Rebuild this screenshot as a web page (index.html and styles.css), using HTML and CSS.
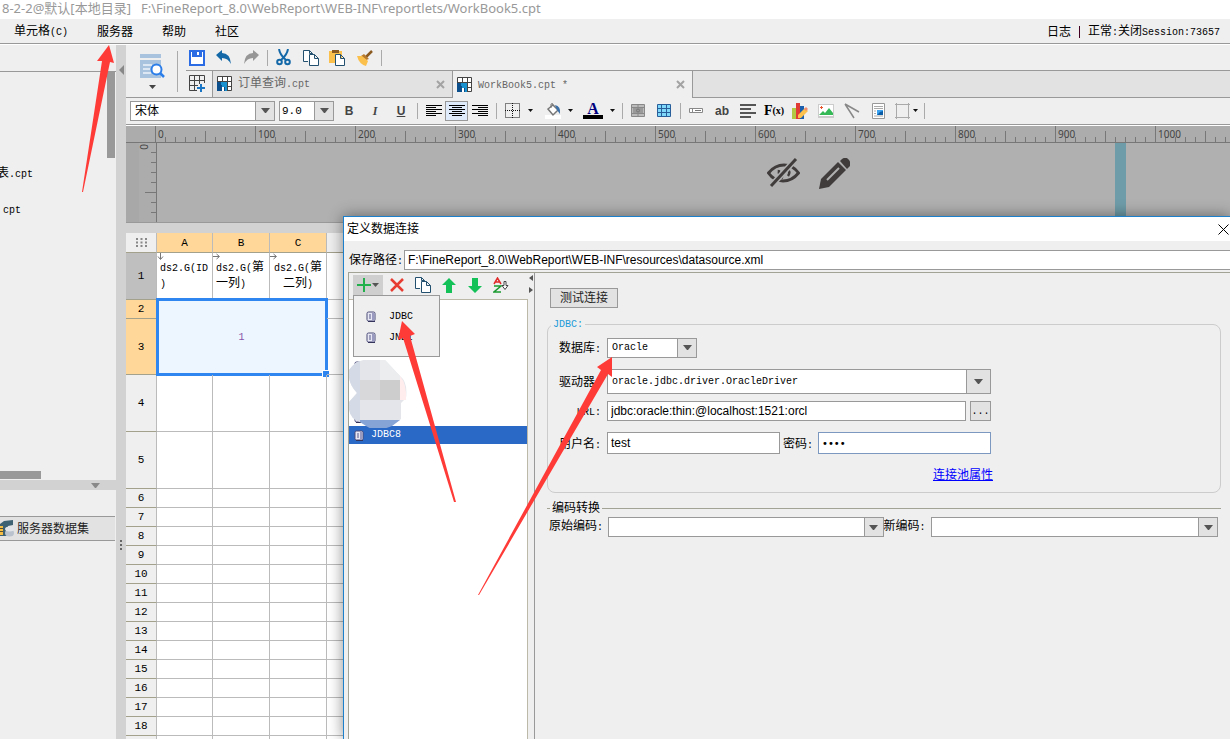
FILE: index.html
```html
<!DOCTYPE html>
<html lang="zh-CN">
<head>
<meta charset="utf-8">
<title>FineReport Designer</title>
<link rel="stylesheet" href="styles.css">
</head>
<body>
<svg class="defs" width="0" height="0" aria-hidden="true">
  <symbol id="db" viewBox="0 0 10 11"><rect x="1" y="1" width="8" height="9" rx="1.500" fill="#e8e8f4" stroke="#4a4a78"/><path d="M6 2h2.500v7.500H6z" fill="#9a9ac0"/><path d="M4 3v5" stroke="#55558a" fill="none"/><path d="M2 10.500h7" stroke="#33335c"/></symbol>
  <symbol id="book" viewBox="0 0 16 16"><path d="M.5.5h14v14H.5z" fill="#fff" stroke="#444"/><path d="M5.500.5v14M10.500.5v14M.5 5.500h14M.5 10.500h14" stroke="#444" fill="none"/><path d="M0 6h10v9H0z" fill="#0b4f8c"/><path d="M4 6h6v9H8v-4H5V9H4z" fill="#1a92d0"/><path d="M5 11h2v4H5z" fill="#fff"/></symbol>
  <symbol id="copy" viewBox="0 0 16 16"><path d="M5 11.500H.5V.5h6l3 3V5M6.500.5v3h3" fill="#fff" stroke="#24506f"/><path d="M6.500 4.500h5l4 4v7h-9zM11.500 4.500v4h4" fill="#fff" stroke="#24506f"/></symbol>
  <symbol id="caret" viewBox="0 0 9 5"><path d="M0 0h9L5 5H4z" fill="#555"/></symbol>
  <symbol id="drop" viewBox="0 0 5 3"><path d="M0 0h5L2.500 3z" fill="#111"/></symbol>
</svg>

<header class="titlebar"><span>8-2-2@默认[本地目录]</span><span>F:\FineReport_8.0\WebReport\WEB-INF\reportlets/WorkBook5.cpt</span></header>

<nav class="menubar">
  <button>单元格<i>(C)</i></button>
  <button>服务器</button>
  <button>帮助</button>
  <button>社区</button>
  <div class="status"><span>日志</span><span class="bar"></span><span>正常<i>:</i>关闭<i>Session:73657</i></span></div>
</nav>

<div class="workspace">
  <aside class="side">
    <div class="side-head"></div>
    <div class="tree">
      <div class="tree-list">
        <div class="node node-a"><span>表<i>.cpt</i></span></div>
        <div class="node node-b"><span><i>cpt</i></span></div>
      </div>
      <div class="vthumb"></div>
    </div>
    <div class="hthumb"></div>
    <div class="hsplit"><svg width="9" height="5"><path d="M0 0h9L5 5H4z" fill="#888"/></svg></div>
    <div class="dataset">
      <svg width="14" height="17" viewBox="0 0 14 17"><path d="M0 4 4 1l9-1v5L8 6v10H0z" fill="#3f6273"/><path d="M0 6h3v9H0z" fill="#f6be42"/><path d="M0 8.500h3M0 11.500h3" stroke="#5a5030"/><ellipse cx="9.500" cy="13" rx="4.500" ry="3.500" fill="#b9c2cd"/><ellipse cx="9.500" cy="9" rx="4.500" ry="2.500" fill="#e1e5ea"/></svg>
      <span>服务器数据集</span>
    </div>
    <div class="side-rest"></div>
  </aside>
  <div class="vsplit">
    <svg width="5" height="10"><path d="M5 0v10L0 5z" fill="#888"/></svg>
    <svg width="3" height="11"><path d="M0 0h2v2H0zM0 4h2v2H0zM0 8h2v2H0z" fill="#666"/></svg>
  </div>

  <main class="editor">
    <div class="top">
      <button class="preview" aria-label="预览">
        <svg width="25" height="26" viewBox="0 0 25 26"><path d="M0 1h21v4H0z" fill="#a9c3de"/><path d="M0 7h21v18H0z" fill="#a9c3de"/><path d="M3 12h9M3 16h7M3 20h8" stroke="#eef4fa" stroke-width="1.500"/><circle cx="16.500" cy="16.500" r="5" fill="#fff" stroke="#2b7de9" stroke-width="2"/><path d="m20 20 4 4" stroke="#2b7de9" stroke-width="2.500"/></svg>
        <svg width="7" height="4"><path d="M0 0h7L3.500 4z" fill="#444"/></svg>
      </button>
      <div class="top-right">
        <div class="tools">
          <button aria-label="保存"><svg width="16" height="16"><path d="M1 1h14v14H1z" fill="#fff" stroke="#2b6be4" stroke-width="2"/><path d="M3 1h10v6H3z" fill="#2b6be4"/><path d="M8 2h2v3H8z" fill="#fff"/></svg></button>
          <button aria-label="撤销"><svg width="16" height="15"><path d="M0 5 6 0v3q8 0 9 11-3-6-9-6v3z" fill="#1368a8"/></svg></button>
          <button aria-label="重做"><svg width="16" height="15"><path d="M16 5 10 0v3Q2 3 1 14q3-6 9-6v3z" fill="#969696"/></svg></button>
          <span class="sep"></span>
          <button aria-label="剪切"><svg width="15" height="17" fill="none" stroke="#1368a8" stroke-width="2"><path d="M3 0q1 6 7 11M12 0q-1 6-7 11"/><circle cx="3.500" cy="13" r="2.300"/><circle cx="11.500" cy="13" r="2.300"/></svg></button>
          <button aria-label="复制"><svg width="16" height="16"><use href="#copy"/></svg></button>
          <button aria-label="粘贴"><svg width="17" height="16"><path d="M0 1h13v12H0z" fill="#fbc04c"/><path d="M3 0h7v3H3z" fill="#8a5a20"/><path d="M6.500 4.500h5l4 4v7h-9zM11.500 4.500v4h4" fill="#fff" stroke="#24506f"/></svg></button>
          <button aria-label="格式刷"><svg width="16" height="16"><path d="m15 1-6 6" stroke="#8a5a20" stroke-width="2.500"/><path d="M7 4l5 5-3 1-5-4z" fill="#b87a2c"/><path d="M0 6h5l6 5-2 5q-7-2-9-10z" fill="#fbc04c"/></svg></button>
          <span class="sep"></span>
        </div>
        <div class="tabs">
          <button class="newtab" aria-label="新建"><svg width="17" height="17"><path d="M8 15.500H.5V.5h15V8M5.500.5v15M10.500.5V9M.5 5.500h15M.5 10.500H9" fill="none" stroke="#444"/><path d="M12 9v8M8 13h8" stroke="#1a75c4" stroke-width="2"/></svg></button>
          <div class="tab"><svg width="16" height="16"><use href="#book"/></svg><span class="name">订单查询<i>.cpt</i></span><button aria-label="关闭"><svg width="9" height="9"><path d="m1 1 7 7M8 1 1 8" stroke="#a3a3a3" stroke-width="2"/></svg></button></div>
          <div class="tab active"><svg width="16" height="16"><use href="#book"/></svg><span class="name"><i>WorkBook5.cpt *</i></span><button aria-label="关闭"><svg width="9" height="9"><path d="m1 1 7 7M8 1 1 8" stroke="#a3a3a3" stroke-width="2"/></svg></button></div>
          <div class="tab-rest"></div>
        </div>
      </div>
    </div>

    <div class="format">
      <label class="combo font"><select aria-label="字体"><option>宋体</option></select><span><svg width="9" height="5"><use href="#caret"/></svg></span></label>
      <label class="combo size"><select class="mono" aria-label="字号"><option>9.0</option></select><span><svg width="9" height="5"><use href="#caret"/></svg></span></label>
      <div class="group">
        <button class="b">B</button><button class="it">I</button><button class="u">U</button>
      </div>
      <span class="sep"></span>
      <div class="group aligns">
        <button aria-label="左对齐"><svg width="16" height="12"><path d="M0 .5h16M0 2.500h10M0 4.500h16M0 6.500h10M0 8.500h16M0 10.500h10" stroke="#000"/></svg></button>
        <button class="on" aria-label="居中"><svg width="16" height="12"><path d="M0 .5h16M3 2.500h10M0 4.500h16M3 6.500h10M0 8.500h16M3 10.500h10" stroke="#000"/></svg></button>
        <button aria-label="右对齐"><svg width="16" height="12"><path d="M0 .5h16M6 2.500h10M0 4.500h16M6 6.500h10M0 8.500h16M6 10.500h10" stroke="#000"/></svg></button>
      </div>
      <span class="sep"></span>
      <div class="group wide">
        <button aria-label="边框"><svg width="16" height="16"><path d="M.5.5h14v14H.5zM7.500 0v15M0 7.500h15" fill="none" stroke="#111" stroke-dasharray="1 1"/></svg><svg width="5" height="3"><use href="#drop"/></svg></button>
        <button aria-label="填充"><svg width="16" height="16"><path d="M0 12h16v4H0z" fill="#fff"/><path d="m3 6 5-4 5 5-5 5z" fill="#fff" stroke="#777" stroke-width="1.500"/><path d="M6 5V1q2-2 2 2" fill="none" stroke="#777"/><path d="M10 2q6 1 5 9l-3-4z" fill="#3a6fa8"/></svg><svg width="5" height="3"><use href="#drop"/></svg></button>
        <button aria-label="字体颜色"><span class="fontcolor">A</span><svg width="5" height="3"><use href="#drop"/></svg></button>
      </div>
      <span class="sep"></span>
      <div class="group">
        <button aria-label="合并"><svg width="14" height="13"><path d="M.5.500h13v12H.5z" fill="#bbb" stroke="#888"/><path d="M1 3.500h12M1 9.500h12M7 0v3M7 10v3" stroke="#888"/><path d="M2 4h10v5H2z" fill="#999"/><circle cx="7" cy="6.500" r="1.500" fill="none" stroke="#777"/></svg></button>
        <button aria-label="取消合并"><svg width="14" height="13"><path d="M.5.5h13v12H.5z" fill="#7fd8fa" stroke="#285f9a"/><path d="M4.500 0v13M9.500 0v13M0 4.500h14M0 8.500h14" stroke="#285f9a"/></svg></button>
      </div>
      <span class="sep"></span>
      <div class="group">
        <button aria-label="控件"><svg width="14" height="6"><path d="M.5.5h13v4H.5zM3.500 1v3" fill="#fff" stroke="#888"/><path d="M6 2.500h6" stroke="#777"/></svg></button>
        <button class="ab">ab</button>
        <button aria-label="段落"><svg width="16" height="14"><path d="M0 1h16M0 5h11M0 9h16M0 13h11" stroke="#555" stroke-width="2"/></svg></button>
        <button class="fx">F<small>(x)</small></button>
        <button aria-label="图表"><svg width="16" height="16"><path d="M0 5h4v11H0z" fill="#b2c944"/><path d="M4 0h4v16H4z" fill="#e13b36"/><path d="M8 3h4v13H8z" fill="#1a5fae"/><path d="m6 12 7-7 3 3-7 7H6z" fill="#fcc04d"/><path d="m12 6 2-2 2 2-2 2z" fill="#f08a70"/></svg></button>
        <button aria-label="图片"><svg width="16" height="14"><path d="M0 0h16v14H0z" fill="#ccc"/><path d="M1 1h14v11H1z" fill="#fff"/><path d="m1 11 4-4 2 2 4-5 4 5v2z" fill="#35b957"/><path d="M3.500 2v3M2 3.500h3" stroke="#e8552d"/></svg></button>
        <button aria-label="斜线"><svg width="16" height="16"><path d="m1 1 9 14M1 1l14 8" fill="none" stroke="#888" stroke-width="1.500"/></svg></button>
        <button aria-label="子报表"><svg width="13" height="16"><path d="M.5.5h12v15H.5z" fill="#fff" stroke="#999"/><path d="M2 3.500h9M2 5.500h9M2 8h2M2 10.500h2M2 13h9" stroke="#aaa"/><path d="M5 7h6v5H5z" fill="#3ba2f0"/><path d="m5 12 3-3 3-1v4z" fill="#0b5da8"/></svg></button>
        <button class="shape" aria-label="悬浮元素"><svg width="16" height="16"><path d="M1.500 0v16M13.500 0v16M0 1.500h15M0 14.500h15" stroke="#aaa"/></svg><svg width="5" height="3"><use href="#drop"/></svg></button>
      </div>
      <span class="sep"></span>
    </div>

    <div class="ruler"><span>0</span><span>100</span><span>200</span><span>300</span><span>400</span><span>500</span><span>600</span><span>700</span><span>800</span><span>900</span><span>1000</span></div>
    <div class="stage">
      <div class="vruler"><span>0</span></div>
      <div class="canvas">
        <svg width="33" height="30" viewBox="0 0 33 30" fill="none" stroke="#413c3c" stroke-width="3"><path d="M1.500 15Q8 7 17 7t14.500 8Q25 23 16 23T1.500 15z"/><path d="M12 12q-1 6 4 8M20 10q4 4 1 8" stroke-width="2.500"/><path d="M29 1 4 28" stroke="#b0b0b0" stroke-width="6"/><path d="M29 1 4 28"/></svg>
        <svg width="31" height="31" viewBox="0 0 31 31"><path d="M0 31 2 21 19 4l8 8L10 29z" fill="#413c3c"/><path d="m8 22 12-12" stroke="#b0b0b0" stroke-width="2"/><path d="m21 3 2-2q4-3 7 1t0 7l-2 2z" fill="#413c3c"/></svg>
        <div class="guide"></div>
      </div>
    </div>

    <table class="grid">
      <colgroup><col class="c0"><col class="c1"><col class="c2"><col class="c2"><col></colgroup>
      <thead><tr><th class="corner"><svg width="11" height="9"><path d="M0 1h11M0 4.500h11M0 8h11" stroke="#888" stroke-width="2" stroke-dasharray="2 2.500"/></svg></th><th class="sel">A</th><th class="sel">B</th><th class="sel">C</th><th></th></tr></thead>
      <tbody>
        <tr class="h47"><th class="dim">1</th>
          <td><svg class="mark" width="7" height="7"><path d="M3.500 0v6M1 3.500l2.500 3 2.500-3" fill="none" stroke="#777"/></svg><i>ds2.G(ID</i><br><i>)</i></td>
          <td><svg class="mark" width="7" height="7"><path d="M0 3.500h6M3.500 1l3 2.500-3 2.500" fill="none" stroke="#777"/></svg><i>ds2.G(</i>第<br>一列<i>)</i></td>
          <td class="mid"><svg class="mark" width="7" height="7"><path d="M0 3.500h6M3.500 1l3 2.500-3 2.500" fill="none" stroke="#777"/></svg><i>ds2.G(</i>第<br>二列<i>)</i></td><td></td></tr>
        <tr class="h19"><th class="sel">2</th><td class="merged" colspan="3" rowspan="2"><i>1</i></td><td></td></tr>
        <tr class="h56"><th class="sel">3</th><td></td></tr>
        <tr class="h57"><th>4</th><td></td><td></td><td></td><td></td></tr>
        <tr class="h57"><th>5</th><td></td><td></td><td></td><td></td></tr>
        <tr class="h19"><th>6</th><td></td><td></td><td></td><td></td></tr>
        <tr class="h19"><th>7</th><td></td><td></td><td></td><td></td></tr>
        <tr class="h19"><th>8</th><td></td><td></td><td></td><td></td></tr>
        <tr class="h19"><th>9</th><td></td><td></td><td></td><td></td></tr>
        <tr class="h19"><th>10</th><td></td><td></td><td></td><td></td></tr>
        <tr class="h19"><th>11</th><td></td><td></td><td></td><td></td></tr>
        <tr class="h19"><th>12</th><td></td><td></td><td></td><td></td></tr>
        <tr class="h19"><th>13</th><td></td><td></td><td></td><td></td></tr>
        <tr class="h19"><th>14</th><td></td><td></td><td></td><td></td></tr>
        <tr class="h19"><th>15</th><td></td><td></td><td></td><td></td></tr>
        <tr class="h19"><th>16</th><td></td><td></td><td></td><td></td></tr>
        <tr class="h19"><th>17</th><td></td><td></td><td></td><td></td></tr>
        <tr class="h19"><th>18</th><td></td><td></td><td></td><td></td></tr>
        <tr class="h19"><th></th><td></td><td></td><td></td><td></td></tr>
      </tbody>
    </table>
  </main>
</div>

<section class="dialog" role="dialog" aria-labelledby="dlg-title">
  <div class="dlg-title"><span id="dlg-title">定义数据连接</span><button aria-label="关闭"><svg width="11" height="11"><path d="m.5.5 10 10M10.500.5l-10 10" stroke="#000"/></svg></button></div>
  <div class="path"><label for="path">保存路径<i>:</i></label><input id="path" value="F:\FineReport_8.0\WebReport\WEB-INF\resources\datasource.xml"></div>
  <div class="dlg-body">
    <div class="conns">
      <div class="conn-tools">
        <button class="add" aria-label="添加"><svg width="14" height="14"><path d="M7 0v14M0 7h14" stroke="#22b04c" stroke-width="2"/></svg><svg width="7" height="4"><path d="M0 0h7L3.500 4z" fill="#555"/></svg></button>
        <button aria-label="删除"><svg width="14" height="14"><path d="m1 1 12 12M13 1 1 13" stroke="#e63c32" stroke-width="2.500"/></svg></button>
        <button aria-label="复制"><svg width="16" height="16"><use href="#copy"/></svg></button>
        <button aria-label="上移"><svg width="14" height="15"><path d="m7 0 7 7h-4v8H4V7H0z" fill="#14c158"/></svg></button>
        <button aria-label="下移"><svg width="14" height="15"><path d="m7 15 7-7h-4V0H4v8H0z" fill="#14c158"/></svg></button>
        <button aria-label="排序"><svg width="16" height="16"><path d="m1 7 3.500-6L8 7M2.500 5h4" fill="none" stroke="#e12a2a" stroke-width="1.500"/><path d="M1 9h7l-7 6h7" fill="none" stroke="#1a9a30" stroke-width="1.500"/><path d="M11 4.500h2v4h2l-3 4-3-4h2z" fill="#fff" stroke="#444"/></svg></button>
      </div>
      <div class="list">
        <div class="item"><svg width="10" height="11"><use href="#db"/></svg></div>
        <div class="item"><svg width="10" height="11"><use href="#db"/></svg></div>
        <div class="item selected"><svg width="10" height="11"><use href="#db"/></svg><i>JDBC8</i></div>
      </div>
      <svg class="mosaic" width="58" height="68" viewBox="0 0 58 68"><path d="M0 10Q8-2 22 0h14l15 16q8 6 6 22l-5 5v16l-8 6q-16 7-26 0Q-2 58 0 42l8-9Q-2 22 0 10z" fill="#e3e5ea"/><path d="M0 10Q6 2 11 1v61Q-2 58 0 42l8-9Q-2 22 0 10z" fill="#d5dbe6"/><path d="M11 20h20v20H11z" fill="#d8d8da"/><path d="M31 20h20v20H31z" fill="#cdcdcd"/><path d="M31 0h5l15 16v4H31z" fill="#ebedef"/><path d="M51 16q7 8 6 24h-6z" fill="#ffeded"/><path d="M11 60h40l-8 6q-16 7-26 0l-6-4z" fill="#86a4d6"/></svg>
      <div class="popup" role="menu">
        <button role="menuitem"><svg width="10" height="11"><use href="#db"/></svg><i>JDBC</i></button>
        <button role="menuitem"><svg width="10" height="11"><use href="#db"/></svg><i>JNDI</i></button>
      </div>
    </div>
    <div class="grip"><svg width="4" height="18"><path d="M4 0v6L0 3zM0 12v6l4-3z" fill="#555"/></svg></div>
    <form class="detail">
      <button type="button" class="test">测试连接</button>
      <fieldset class="jdbc">
        <legend><i>JDBC:</i></legend>
        <div class="row"><label for="db-type">数据库<i>:</i></label><span class="combo dbtype"><select id="db-type" class="mono"><option>Oracle</option></select><span><svg width="9" height="5"><use href="#caret"/></svg></span></span></div>
        <div class="row close"><label for="driver">驱动器<i>:</i></label><span class="combo driver"><select id="driver" class="mono"><option>oracle.jdbc.driver.OracleDriver</option></select><span><svg width="9" height="5"><use href="#caret"/></svg></span></span></div>
        <div class="row"><label for="url"><i>URL:</i></label><input id="url" class="url" value="jdbc:oracle:thin:@localhost:1521:orcl"><button type="button" class="more"><i>...</i></button></div>
        <div class="row tall"><label for="user">用户名<i>:</i></label><input id="user" value="test"><label class="pwlabel" for="pw">密码<i>:</i></label><input id="pw" class="pw" type="password" value="test"></div>
        <div class="row link"><a href="#pool">连接池属性</a></div>
      </fieldset>
      <fieldset class="enc">
        <legend>编码转换</legend>
        <div class="encrow"><label for="enc1">原始编码<i>:</i></label><span class="combo"><select id="enc1"><option></option></select><span><svg width="9" height="5"><use href="#caret"/></svg></span></span><label for="enc2">新编码<i>:</i></label><span class="combo"><select id="enc2"><option></option></select><span><svg width="9" height="5"><use href="#caret"/></svg></span></span></div>
      </fieldset>
    </form>
  </div>
</section>

<svg class="arrows" width="620" height="600" aria-hidden="true" fill="#ff3b38">
  <path d="M109 45 114 63 110 62 83 192H82L102 61H97z"/>
  <path d="M402 321 415 334 410 336 456 502H454L403 338 398 340z"/>
  <path d="M612 357 612 377 608 374 479 595H478L601 370 597 367z"/>
</svg>
</body>
</html>
```
FILE: styles.css
```css
* { box-sizing: border-box; }
body {
  margin: 0;
  height: 100vh;
  overflow: hidden;
  position: relative;
  display: flex;
  flex-direction: column;
  background: #efefef;
  color: #000;
  font: 12px/16px "Liberation Sans", "Noto Sans CJK SC", sans-serif;
}
i, .mono { font-family: "Liberation Mono", "Noto Sans CJK SC", monospace; font-size: 10px; font-style: normal; }
button, input, select { font: inherit; color: inherit; margin: 0; padding: 0; border: 0; background: none; border-radius: 0; }
select.mono { font-family: "Liberation Mono", monospace; font-size: 10px; }
svg { display: block; flex: none; }
.defs { position: absolute; }

.titlebar { flex: none; display: flex; gap: 10px; height: 19px; padding-left: 2px; background: #fff; color: #999; font-family: "Noto Sans", "Noto Sans CJK SC", sans-serif; font-size: 13px; white-space: pre; }
.menubar { flex: none; display: flex; align-items: center; gap: 29px; height: 26px; padding: 0 10px 0 14px; border-bottom: 1px solid #fff; box-shadow: inset 0 -1px #999; }
.status { margin-left: auto; display: flex; align-items: center; gap: 8px; }
.bar { width: 1px; height: 12px; background: #402; }

.workspace { flex: 1; min-height: 0; display: flex; }
.side { flex: none; width: 116px; display: flex; flex-direction: column; }
.side-head { height: 27px; border-bottom: 1px solid #999; }
.tree { height: 399px; display: flex; justify-content: space-between; }
.tree-list { padding-top: 93px; }
.node { display: flex; justify-content: flex-end; overflow: hidden; height: 36px; white-space: nowrap; }
.node-a { width: 33px; }
.node-b { width: 21px; }
.vthumb { width: 8px; height: 86px; margin-right: 1px; background: #999; }
.hthumb { width: 41px; height: 8px; background: #999; }
.hsplit { height: 10px; margin-top: 1px; padding: 3px 16px 0 0; display: flex; justify-content: flex-end; background: #d2d2d2; }
.dataset { display: flex; align-items: center; gap: 3px; height: 25px; margin: 26px 1px 0 0; border: solid #999; border-width: 1px 0; background: #e2e2e2; color: #222; }
.vsplit { flex: none; width: 10px; padding-top: 20px; display: flex; flex-direction: column; align-items: center; gap: 465px; background: #d2d2d2; }

.editor { flex: 1; min-width: 0; display: flex; flex-direction: column; background: #d2d2d2; }
.top { flex: none; display: flex; height: 53px; background: #efefef; }
.preview { width: 52px; flex: none; display: flex; flex-direction: column; align-items: center; gap: 6px; padding-top: 8px; border-bottom: 1px solid #999; background: linear-gradient(#aaa, #aaa) 100% 6px / 1px 41px no-repeat; }
.top-right { flex: 1; display: flex; flex-direction: column; }
.tools { display: flex; align-items: center; height: 25px; padding-left: 5px; }
.tools button { width: 27px; height: 24px; display: flex; align-items: center; justify-content: center; }
.sep { flex: none; width: 1px; height: 16px; margin: 0 2px 0 3px; background: #aaa; }
.tabs { display: flex; height: 28px; background: linear-gradient(#999, #999) 8px 0 / 100% 1px no-repeat; }
.newtab { width: 34px; display: flex; align-items: center; justify-content: center; padding-left: 4px; border-bottom: 1px solid #999; }
.tab { width: 240px; display: flex; align-items: center; gap: 5px; padding: 0 7px 0 4px; border: solid #999; border-width: 1px 0 1px 1px; background: #e2e2e2; color: #666; }
.tab .name { flex: 1; }
.tab.active { width: 241px; border-width: 1px 1px 0 1px; background: #efefef; }
.tab-rest { flex: 1; border: solid #999; border-width: 1px 0; background: #e2e2e2; }

.format { flex: none; display: flex; align-items: center; height: 28px; padding: 0 0 2px 4px; border-bottom: 1px solid #fff; box-shadow: inset 0 -1px #999; background: #efefef; }
.combo { display: grid; height: 20px; border: 1px solid #999; background: #fff; }
.combo select { grid-area: 1 / 1; min-width: 0; width: 100%; appearance: none; padding-left: 4px; color: #000; opacity: 1; }
.combo > span { grid-area: 1 / 1; justify-self: end; width: 19px; display: flex; align-items: center; justify-content: center; border-left: 1px solid #999; background: #e2e2e2; pointer-events: none; }
.font { width: 145px; }
.size { width: 55px; margin: 0 2px 0 4px; }
.size select { padding-left: 2px; font-size: 11px; }
.group { display: flex; }
.group button { width: 26px; height: 20px; display: flex; align-items: center; justify-content: center; color: #444; }
.group .b { font-weight: 700; }
.group .it { font-family: "Liberation Serif", serif; font-style: italic; font-weight: 700; }
.group .u { text-decoration: underline; font-weight: 700; }
.aligns { padding: 0 2px; }
.aligns button { width: 23px; }
.aligns .on { border: 1px solid #999; background: #dfeafa; }
.wide button { width: 40px; gap: 7px; }
.fontcolor { width: 20px; height: 16px; border-bottom: 4px solid #000; color: #000080; font: 700 16px/12px "Liberation Serif", serif; text-align: center; }
.group .ab { font-weight: 700; }
.group .fx { color: #000; font: 700 14px/16px "Liberation Serif", serif; }
.fx small { font-size: 10px; }
.group .shape { width: 30px; gap: 2px; }

.ruler { flex: none; display: flex; height: 17px; padding-left: 29px; overflow: hidden; border-bottom: 1px solid #777; color: #444; font: 10px/16px "Noto Sans", sans-serif;
  background:
    repeating-linear-gradient(90deg, #777 0 1px, transparent 1px 100px) 29px 0 / 100% 100% no-repeat,
    repeating-linear-gradient(90deg, #777 0 1px, transparent 1px 50px) 29px 100% / 100% 11px no-repeat,
    repeating-linear-gradient(90deg, #777 0 1px, transparent 1px 10px) 29px 100% / 100% 5px no-repeat,
    #acacac; }
.ruler span { flex: none; width: 100px; padding-left: 3px; }
.stage { flex: none; display: flex; height: 80px; border-bottom: 1px solid #999; background: #b0b0b0; }
.vruler { flex: none; width: 31px; border-right: 1px solid #777; color: #444; font: 10px/10px "Noto Sans", sans-serif;
  background:
    repeating-linear-gradient(transparent 0 9px, #777 9px 10px) 100% 0 / 5px 100% no-repeat,
    linear-gradient(#777, #777) 100% 49px / 11px 1px no-repeat,
    linear-gradient(90deg, #a8a8a8 13px, #acacac 13px); }
.vruler span { display: block; width: 10px; margin-left: 13px; writing-mode: vertical-rl; transform: rotate(180deg); padding-bottom: 1px; }
.canvas { flex: 1; display: flex; gap: 19px; padding-left: 610px; }
.canvas svg { margin-top: 15px; }
.guide { width: 11px; margin-left: 246px; background: #6e9ca8; }

.grid { flex: none; width: 100%; margin-top: 10px; table-layout: fixed; border-collapse: separate; border-spacing: 0; background: #fff; line-height: 14px; }
.c0 { width: 31px; }
.c1 { width: 56px; }
.c2 { width: 57px; }
.grid td, .grid th { padding: 0; border: solid #bbb; border-width: 0 1px 1px 0; }
.grid th { background: #efefef; border-bottom-color: #a3a08c; font: 11px/14px "Liberation Mono", monospace; }
.grid thead th { height: 20px; }
.grid th.sel { background: #ffd799; }
.grid th.dim { background: #bfbfbf; }
.grid .corner svg { margin: 0 auto; }
.grid td { position: relative; padding: 0 3px; }
.grid .mid { text-align: center; }
.h19 { height: 19px; }
.h47 { height: 47px; }
.h56 { height: 56px; }
.h57 { height: 57px; }
.mark { position: absolute; top: 0; left: 0; }
.grid .merged { background: #edf5fe; color: #85a; text-align: center; }
.merged::before { content: ""; position: absolute; inset: -2px -2px -2px -1px; border: 3px solid #2f86f1; }
.merged::after { content: ""; position: absolute; right: -3px; bottom: -3px; width: 6px; height: 6px; border: solid #fff; border-width: 1px 0 0 1px; background: #2f86f1; }

.dialog { position: absolute; top: 216px; right: 0; bottom: 0; left: 343px; display: flex; flex-direction: column; border: solid #1c80cc; border-width: 1px 0 0 1px; background: #efefef; box-shadow: 0 0 14px rgba(0, 0, 0, .45); }
.dlg-title { flex: none; display: flex; align-items: center; justify-content: space-between; height: 24px; padding: 0 1px 0 3px; background: #fff; }
.path { flex: none; display: flex; align-items: center; gap: 1px; padding: 8px 0 2px 5px; }
.path label { width: 54px; padding-top: 3px; white-space: nowrap; }
input { height: 20px; padding: 0 3px; border: 1px solid #999; background: #fff; }
.path input { flex: 1; border-right: 0; }
.dlg-body { flex: 1; min-height: 0; display: flex; margin-left: 4px; border: solid #a3a395; border-width: 1px 0 0 1px; }
.conns { flex: none; width: 179px; position: relative; display: flex; flex-direction: column; }
.conn-tools { display: flex; gap: 2px; height: 26px; padding: 2px 0 0 4px; }
.conn-tools button { width: 24px; height: 20px; display: flex; align-items: center; justify-content: center; }
.conn-tools .add { width: 30px; gap: 1px; background: #cfcfcf; }
.list { flex: 1; padding-top: 54px; border: solid #bdb9a8; border-width: 1px 1px 0 0; background: #fff; }
.item { display: flex; align-items: center; gap: 7px; height: 18px; padding-left: 5px; margin-top: 3px; }
.item + .item { margin-top: 33px; }
.item + .selected { margin-top: 0; background: #2b69c6; color: #fff; }
.mosaic { position: absolute; top: 87px; left: 0; }
.popup { position: absolute; top: 22px; left: 4px; width: 87px; height: 62px; padding-top: 10px; border: 1px solid #999; background: #efefef; }
.popup button { display: flex; align-items: center; gap: 13px; width: 100%; height: 21px; padding-left: 12px; }
.grip { flex: none; width: 7px; border-right: 1px solid #999; }
.grip svg { margin: 2px 0 0 1px; }

.detail { flex: 1; min-width: 0; padding: 15px 9px 0 12px; }
.test { display: block; width: 68px; height: 20px; margin-left: 3px; border: 1px solid #999; background: #e2e2e2; color: #222; }
fieldset { margin: 0; min-width: 0; }
.jdbc { margin-top: 7px; padding: 4px 0 9px; border: 1px solid #ccc; border-radius: 8px; }
.jdbc legend { margin-left: 3px; padding: 0 2px; color: #1a9ad8; }
.row { display: flex; align-items: center; margin-bottom: 11px; }
.row > label { width: 59px; padding: 3px 6px 0 0; text-align: right; white-space: nowrap; }
.row.close { margin-bottom: 6px; }
.dbtype { width: 90px; }
.driver { width: 384px; height: 25px; }
.driver > span { width: 24px; }
.row .url { width: 359px; }
.more { width: 21px; height: 20px; margin-left: 4px; border: 1px solid #999; background: #e2e2e2; }
.tall input { width: 173px; height: 22px; }
.row > .pwlabel { width: 38px; padding: 3px 0 0 3px; text-align: left; }
.tall .pw { border-color: #7d98c0; font-family: "DejaVu Sans", sans-serif; font-size: 10px; }
.row.link { width: 445px; justify-content: flex-end; margin: 13px 0 0; }
.row a { color: #00f; }
.enc { margin: 7px 0 0; padding: 1px 3px 0 2px; border: solid #a3a395; border-width: 1px 0 0; }
.enc legend { padding: 0 2px; margin-left: 1px; }
.encrow { display: flex; align-items: center; }
.encrow .combo { flex: 276; }
.encrow .combo:last-child { flex: 288; }
.encrow label { flex: none; padding-right: 5px; white-space: nowrap; }

.arrows { position: absolute; top: 0; left: 0; pointer-events: none; }
```
